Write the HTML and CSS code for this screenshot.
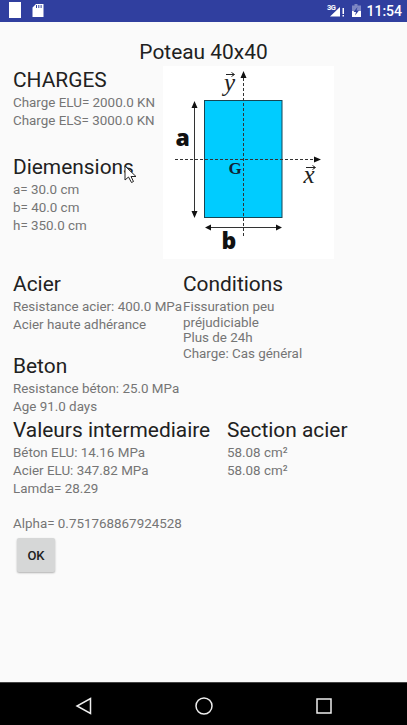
FILE: index.html
```html
<!DOCTYPE html>
<html lang="fr">

<head>
    <meta charset="UTF-8">
    <meta name="viewport" content="width=device-width, initial-scale=1.0">
    <title>Poteau 40x40</title>
    <link rel="stylesheet" href="styles.css">
</head>

<body>
    <header class="status-bar">
        <svg class="status-left" width="60" height="22" viewBox="0 0 60 22">
            <path fill="#fff" d="M9 2h12v16H9zM36 4h7.500v13H32.500V7.500z"/>
            <path stroke="#303f9f" stroke-width="1" d="M36.500 5v3M38.800 5v3M41.100 5v3"/>
        </svg>
        <svg class="status-right" width="40" height="22" viewBox="0 0 40 22">
            <text class="network" x="2" y="10">3G</text>
            <path fill="#fff" d="M15 7v9.500H5zM17.500 8h1.500v6h-1.500zM17.500 15h1.500v1.500h-1.500z"/>
            <path fill="#7d87c4" d="M27 5.500h2.500V4h3v1.500H36V11h-9z"/>
            <path fill="#fff" d="M27 11h9v6h-9z"/>
            <path fill="#303f9f" d="M32.500 7l-4 5h2.500l-1 3.500 4-5h-2.500z"/>
        </svg>
        <span class="clock">11:54</span>
    </header>

    <main class="content">
        <h1>Poteau 40x40</h1>

        <div class="row row-top">
            <div class="col-left">
                <section class="charges">
                    <h2>CHARGES</h2>
                    <p>Charge ELU= 2000.0 KN</p>
                    <p>Charge ELS= 3000.0 KN</p>
                </section>
                <section class="dimensions">
                    <h2>Diemensions</h2>
                    <p>a= 30.0 cm</p>
                    <p>b= 40.0 cm</p>
                    <p>h= 350.0 cm</p>
                    <svg class="cursor" width="13" height="19" viewBox="0 0 13 19">
                        <path fill="#fff" stroke="#222" d="M1 1v14l3.500-3 3 5.500 2-1-2.500-5H12z"/>
                    </svg>
                </section>
            </div>
            <svg class="diagram" width="171" height="193" viewBox="0 0 171 193">
                <rect x="41.500" y="34.500" width="77.500" height="117" fill="#00ccff" stroke="#164554"/>
                <g stroke="#333" fill="none">
                    <path stroke-dasharray="3 2" d="M80.500 12v160M12 93.500h139"/>
                    <path d="M31.500 39v108M46 161.500h69"/>
                </g>
                <path fill="#111" d="M80.500 5l3 7h-6zM158 93.500l-7 3v-6zM31.500 35l3 7h-6zM31.500 152l3-7h-6zM42 161.500l6-3v6zM119 161.500l-6-3v6z"/>
                <text class="side" x="12.500" y="80">a</text>
                <text class="side" x="58.500" y="183">b</text>
                <text class="center" x="65.500" y="107.500">G</text>
                <text class="axis" x="61" y="24.500">y</text>
                <text class="axis" x="140.500" y="117">x</text>
                <path fill="none" stroke="#222" d="M63 8.500h8M68.500 6.500l3 2-3 2M143 101.500h9M149.500 99.500l3 2-3 2"/>
            </svg>
        </div>

        <div class="row row-materials">
            <div class="col-left">
                <section class="acier">
                    <h2>Acier</h2>
                    <p>Resistance acier: 400.0 MPa</p>
                    <p>Acier haute adhérance</p>
                </section>
                <section class="beton">
                    <h2>Beton</h2>
                    <p>Resistance béton: 25.0 MPa</p>
                    <p>Age 91.0 days</p>
                </section>
            </div>
            <section class="conditions">
                <h2>Conditions</h2>
                <p>Fissuration peu<br>préjudiciable<br>Plus de 24h<br>Charge: Cas général</p>
            </section>
        </div>

        <div class="row row-results">
            <section class="valeurs">
                <h2>Valeurs intermediaire</h2>
                <p>Béton ELU: 14.16 MPa</p>
                <p>Acier ELU: 347.82 MPa</p>
                <p>Lamda= 28.29</p>
                <p class="alpha">Alpha= 0.751768867924528</p>
            </section>
            <section class="section-acier">
                <h2>Section acier</h2>
                <p>58.08 cm²</p>
                <p>58.08 cm²</p>
            </section>
        </div>

        <button class="ok-button">OK</button>
    </main>

    <footer class="nav-bar">
        <svg width="18" height="20" viewBox="0 0 18 20">
            <path d="M15.500 2.500v15L2 10z"/>
        </svg>
        <svg width="20" height="20" viewBox="0 0 20 20">
            <circle cx="10" cy="10" r="8"/>
        </svg>
        <svg width="18" height="20" viewBox="0 0 18 20">
            <path d="M2 3h14v14H2z"/>
        </svg>
    </footer>
</body>

</html>
```
FILE: styles.css
```css
* {
    box-sizing: border-box;
}

body {
    display: flex;
    flex-direction: column;
    height: 100vh;
    margin: 0;
    background-color: #fafafa;
    color: #757575;
    font-family: Roboto, sans-serif;
    font-size: 13.4px;
    overflow: hidden;
}

h1,
h2,
p {
    margin: 0;
    white-space: nowrap;
}

h1,
h2 {
    color: #212121;
    font-size: 20.9px;
    font-weight: 400;
    line-height: 27px;
}

p {
    line-height: 18px;
}

.status-bar {
    display: flex;
    align-items: center;
    height: 22px;
    padding-right: 5px;
    background-color: #303f9f;
    color: #fff;
}

.status-right {
    margin-left: auto;
}

.network {
    fill: #fff;
    font-size: 7.5px;
    font-weight: 700;
    letter-spacing: -0.5px;
}

.clock {
    margin-left: 1px;
    font-size: 14px;
    font-weight: 500;
}

.content {
    flex: 1;
    padding: 17px 13px 0;
}

h1 {
    text-align: center;
}

.row {
    display: flex;
}

.row-top .col-left {
    width: 150px;
    padding-top: 1px;
}

.dimensions {
    position: relative;
    margin-top: 24px;
}

.cursor {
    position: absolute;
    left: 111px;
    top: 11px;
}

.diagram {
    background-color: #fff;
}

.side {
    fill: #111;
    font-family: "Open Sans", sans-serif;
    font-size: 23px;
    font-weight: 800;
}

.center {
    fill: #123;
    font-family: "Liberation Serif", serif;
    font-size: 17px;
    font-weight: 700;
}

.axis {
    fill: #222;
    font-family: "Liberation Serif", serif;
    font-size: 25px;
    font-style: italic;
}

.row-materials {
    margin-top: 12px;
}

.row-materials .col-left {
    width: 170px;
}

.beton {
    margin-top: 19px;
}

.conditions p {
    padding-top: 1px;
    line-height: 15.6px;
}

.row-results {
    margin-top: 1px;
}

.valeurs {
    width: 214px;
}

.alpha {
    margin-top: 17px;
}

.ok-button {
    display: block;
    width: 38px;
    height: 34px;
    margin: 5px 0 0 4px;
    padding: 0;
    border: none;
    border-radius: 2px;
    background-color: #d6d7d7;
    box-shadow: 0 1px 2px rgba(0, 0, 0, 0.3);
    color: #212121;
    font-family: inherit;
    font-size: 13px;
    font-weight: 500;
}

.nav-bar {
    display: flex;
    justify-content: space-between;
    align-items: center;
    height: 43px;
    padding: 4px 74px 0 75px;
    border-top: 1px solid #444;
    background-color: #000;
}

.nav-bar svg {
    fill: none;
    stroke: #eee;
    stroke-width: 1.5;
}
```
